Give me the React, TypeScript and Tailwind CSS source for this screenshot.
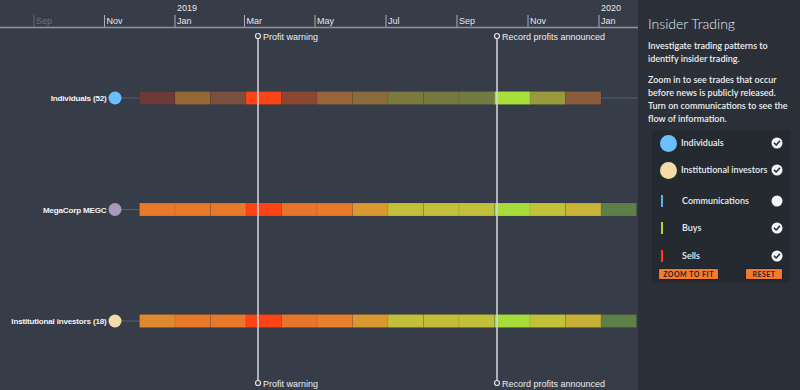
const TICKS = [
  { x: 34, label: "Sep", faded: true },
  { x: 104.5, label: "Nov" },
  { x: 175, label: "Jan" },
  { x: 244.5, label: "Mar" },
  { x: 315, label: "May" },
  { x: 386, label: "Jul" },
  { x: 457, label: "Sep" },
  { x: 528, label: "Nov" },
  { x: 599, label: "Jan" },
];

const ROWS = [
  {
    y: 98,
    label: "Individuals (52)",
    node: "#6cbfff",
    tail: true,
    colors: ["#6b3b3a", "#976637", "#7a4f3f", "#fc4416", "#8b4634", "#98653a", "#8b6a3b", "#7c793d", "#777a40", "#737b44", "#a8df3a", "#989a3c", "#8a5b3d"],
  },
  {
    y: 209.5,
    label: "MegaCorp MEGC",
    node: "#a89ab8",
    colors: ["#e8782a", "#e8782a", "#e8782a", "#fc4416", "#e8742a", "#e8782a", "#d99830", "#c2c038", "#c2c038", "#c2c038", "#a6dc3a", "#c2c238", "#c8b438", "#5f7f48"],
  },
  {
    y: 321,
    label: "Institutional investors (18)",
    node: "#f5dba5",
    colors: ["#e0892c", "#e8782a", "#e8782a", "#fc4416", "#e8762a", "#e87f2a", "#d99830", "#c2c038", "#c4bd38", "#c2c038", "#a6dc3a", "#c2c238", "#c8b038", "#5f7f48"],
  },
];

const EVENTS = [
  { x: 258, label: "Profit warning" },
  { x: 497, label: "Record profits announced" },
];

const SEG_START = 139.5;
const SEG_W = 35.5;

function Timeline() {
  return (
    <svg width={638} height={390} className="block" style={{ fontFamily: '"Liberation Sans", Arial, sans-serif' }}>
      {/* axis */}
      <text x={177} y={11} fontSize={9} fill="#e6e8ec">2019</text>
      <text x={601} y={11} fontSize={9} fill="#e6e8ec">2020</text>
      {TICKS.map((t) => (
        <g key={t.x}>
          <line x1={t.x} y1={15} x2={t.x} y2={27} stroke={t.faded ? "#5f6673" : "#a9afb8"} strokeWidth={1} />
          <text x={t.x + 2} y={24} fontSize={9} fill={t.faded ? "#6c7380" : "#e6e8ec"}>{t.label}</text>
        </g>
      ))}
      <line x1={0} y1={27.5} x2={638} y2={27.5} stroke="#8f96a1" strokeWidth={1.5} />

      {/* rows */}
      {ROWS.map((r) => (
        <g key={r.label}>
          <line x1={121} y1={r.y} x2={SEG_START} y2={r.y} stroke="#526173" strokeWidth={1} />
          {r.tail && <line x1={600} y1={r.y} x2={638} y2={r.y} stroke="#4c6072" strokeWidth={1} />}
          {r.colors.map((c, i) => (
            <rect
              key={i}
              x={SEG_START + i * SEG_W}
              y={r.y - 6.5}
              width={SEG_W}
              height={13}
              fill={c}
              stroke="rgba(0,0,0,0.07)"
              strokeWidth={1}
            />
          ))}
          <circle cx={115} cy={r.y} r={6.5} fill={r.node} />
          <text x={106.5} y={r.y + 3} fontSize={8.1} fontWeight={700} letterSpacing={-0.2} fill="#f2f3f5" textAnchor="end">{r.label}</text>
        </g>
      ))}

      {/* events */}
      {EVENTS.map((e) => (
        <g key={e.x}>
          <line x1={e.x} y1={39} x2={e.x} y2={380} stroke="#d6d8dc" strokeWidth={1.5} />
          <circle cx={e.x} cy={36} r={2.5} fill="#363c48" stroke="#e2e4e8" strokeWidth={1.2} />
          <circle cx={e.x} cy={383} r={2.5} fill="#363c48" stroke="#e2e4e8" strokeWidth={1.2} />
          <text x={e.x + 5} y={39.5} fontSize={9} fill="#eceef1">{e.label}</text>
          <text x={e.x + 5} y={386.5} fontSize={9} fill="#eceef1">{e.label}</text>
        </g>
      ))}
    </svg>
  );
}

function Check({ on }: { on: boolean }) {
  return (
    <svg width={12} height={12} viewBox="0 0 12 12">
      <circle cx={6} cy={6} r={5.5} fill="#f4f5f7" />
      {on && <path d="M3.4 6.2 L5.2 8 L8.6 4.3" fill="none" stroke="#262a31" strokeWidth={1.6} strokeLinecap="round" strokeLinejoin="round" />}
    </svg>
  );
}

const LEGEND = [
  { label: "Individuals", kind: "dot", color: "#6cbfff", on: true, mt: "mt-0" },
  { label: "Institutional investors", kind: "dot", color: "#f5dba5", on: true, mt: "mt-[11px]" },
  { label: "Communications", kind: "bar", color: "#5ab0e8", on: false, mt: "mt-[15px]" },
  { label: "Buys", kind: "bar", color: "#a6dc3a", on: true, mt: "mt-[11px]" },
  { label: "Sells", kind: "bar", color: "#ff3b15", on: true, mt: "mt-[12px]" },
];

function Sidebar() {
  return (
    <div className="flex h-[390px] w-[162px] flex-col bg-[#2b3038] pl-[10px] pr-[10px] pt-[15px] text-[#eceef1]" style={{ fontFamily: 'Lato, "Open Sans", sans-serif' }}>
      <h2 className="text-[14px] font-light leading-[18px] text-[#e6e8ec]">Insider Trading</h2>
      <p className="mt-[6px] text-[9px] font-semibold leading-[13px]">Investigate trading patterns to identify insider trading.</p>
      <p className="mt-[8px] text-[9px] font-semibold leading-[13px]">Zoom in to see trades that occur before news is publicly released. Turn on communications to see the flow of information.</p>
      <div className="ml-[4px] mt-[5px] flex w-[138px] flex-col rounded-sm bg-[#252930] pb-[3px] pl-[8px] pr-[7px] pt-[5px]">
        {LEGEND.map((l) => (
          <div key={l.label} className={`flex h-[16px] items-center ${l.mt}`}>
            <div className="flex w-[21px] items-center">
              {l.kind === "dot" ? (
                <span className="block h-[17px] w-[17px] shrink-0 rounded-full" style={{ backgroundColor: l.color }} />
              ) : (
                <span className="ml-[1px] block h-[12px] w-[2px]" style={{ backgroundColor: l.color }} />
              )}
            </div>
            <span className={`flex-1 text-[9px] font-semibold ${l.kind === "bar" ? "pl-[1px]" : ""}`}>{l.label}</span>
            <Check on={l.on} />
          </div>
        ))}
        <div className="-ml-[2px] mt-[4px] flex items-center justify-between">
          <button className="h-[12px] w-[61px] rounded-[2px] border border-[#1f2227] bg-[#f47a30] text-[7px] font-bold leading-[10px] tracking-[0.5px] text-[#2a2420]">ZOOM TO FIT</button>
          <button className="h-[12px] w-[38px] rounded-[2px] border border-[#1f2227] bg-[#f47a30] text-[7px] font-bold leading-[10px] tracking-[0.5px] text-[#2a2420]">RESET</button>
        </div>
      </div>
    </div>
  );
}

export default function App() {
  return (
    <div className="flex h-[390px] w-[800px] overflow-hidden bg-[#363c48]">
      <div className="w-[638px] shrink-0">
        <Timeline />
      </div>
      <Sidebar />
    </div>
  );
}
